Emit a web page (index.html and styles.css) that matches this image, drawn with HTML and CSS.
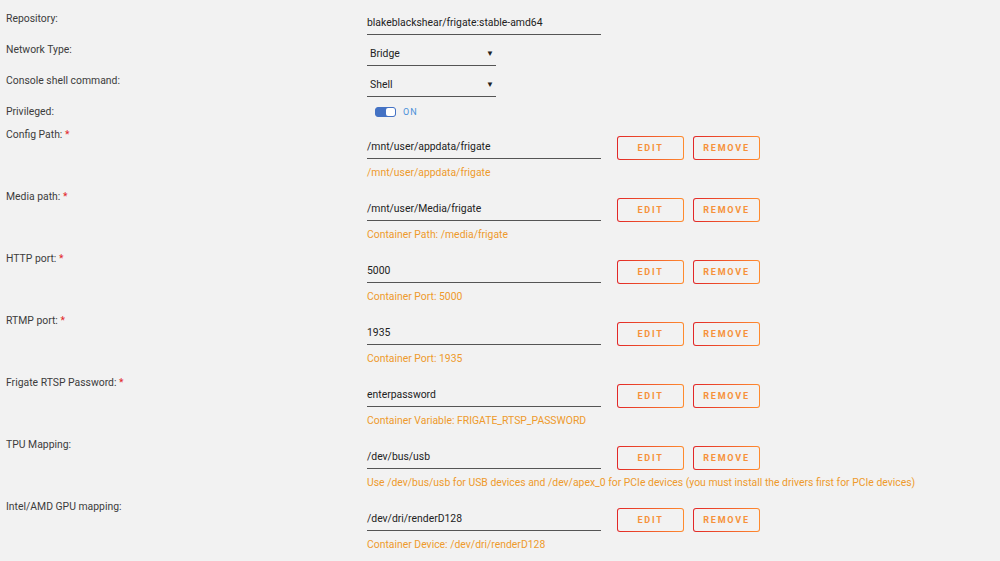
FILE: index.html
```html
<!DOCTYPE html>
<html lang="en">
<head>
    <meta charset="UTF-8">
    <meta name="viewport" content="width=device-width, initial-scale=1.0">
    <title>Update Container - frigate</title>
    <link rel="stylesheet" href="styles.css">
</head>
<body>
    <div class="form">
        <div class="row row-note">
            <div class="label"></div>
            <div class="value"><span class="note">Check the configuration guide: https://github.com/blakeblackshear/frigate/wiki/getting-started-quickly</span></div>
        </div>
        <div class="row row-basic">
            <div class="label">Repository:</div>
            <div class="value"><div class="field wide">blakeblackshear/frigate:stable-amd64</div></div>
        </div>
        <div class="row row-basic">
            <div class="label">Network Type:</div>
            <div class="value"><div class="field select">Bridge<span class="caret">&#9660;</span></div></div>
        </div>
        <div class="row row-basic">
            <div class="label">Console shell command:</div>
            <div class="value"><div class="field select">Shell<span class="caret">&#9660;</span></div></div>
        </div>
        <div class="row row-toggle">
            <div class="label">Privileged:</div>
            <div class="value">
                <span class="switch"><span class="knob"></span></span>
                <span class="switch-text">ON</span>
            </div>
        </div>

        <div class="row row-path">
            <div class="label">Config Path: <span class="req">*</span></div>
            <div class="value">
                <div class="input-line">
                    <div class="field wide">/mnt/user/appdata/frigate</div>
                    <button class="btn">EDIT</button>
                    <button class="btn">REMOVE</button>
                </div>
                <div class="hint">/mnt/user/appdata/frigate</div>
            </div>
        </div>
        <div class="row row-path">
            <div class="label">Media path: <span class="req">*</span></div>
            <div class="value">
                <div class="input-line">
                    <div class="field wide">/mnt/user/Media/frigate</div>
                    <button class="btn">EDIT</button>
                    <button class="btn">REMOVE</button>
                </div>
                <div class="hint">Container Path: /media/frigate</div>
            </div>
        </div>
        <div class="row row-path">
            <div class="label">HTTP port: <span class="req">*</span></div>
            <div class="value">
                <div class="input-line">
                    <div class="field wide">5000</div>
                    <button class="btn">EDIT</button>
                    <button class="btn">REMOVE</button>
                </div>
                <div class="hint">Container Port: 5000</div>
            </div>
        </div>
        <div class="row row-path">
            <div class="label">RTMP port: <span class="req">*</span></div>
            <div class="value">
                <div class="input-line">
                    <div class="field wide">1935</div>
                    <button class="btn">EDIT</button>
                    <button class="btn">REMOVE</button>
                </div>
                <div class="hint">Container Port: 1935</div>
            </div>
        </div>
        <div class="row row-path">
            <div class="label">Frigate RTSP Password: <span class="req">*</span></div>
            <div class="value">
                <div class="input-line">
                    <div class="field wide">enterpassword</div>
                    <button class="btn">EDIT</button>
                    <button class="btn">REMOVE</button>
                </div>
                <div class="hint">Container Variable: FRIGATE_RTSP_PASSWORD</div>
            </div>
        </div>
        <div class="row row-path">
            <div class="label">TPU Mapping:</div>
            <div class="value">
                <div class="input-line">
                    <div class="field wide">/dev/bus/usb</div>
                    <button class="btn">EDIT</button>
                    <button class="btn">REMOVE</button>
                </div>
                <div class="hint">Use /dev/bus/usb for USB devices and /dev/apex_0 for PCIe devices (you must install the drivers first for PCIe devices)</div>
            </div>
        </div>
        <div class="row row-path">
            <div class="label">Intel/AMD GPU mapping:</div>
            <div class="value">
                <div class="input-line">
                    <div class="field wide">/dev/dri/renderD128</div>
                    <button class="btn">EDIT</button>
                    <button class="btn">REMOVE</button>
                </div>
                <div class="hint">Container Device: /dev/dri/renderD128</div>
            </div>
        </div>
    </div>
</body>
</html>
```

FILE: styles.css
```css
body {
    margin: 0;
    background-color: #f2f2f2;
    font-family: Roboto, "Open Sans", sans-serif;
    font-size: 10.4px;
    color: #3c3c3c;
    overflow: hidden;
}
.form {
    padding-top: 1px;
    padding-left: 6px;
}
.row {
    display: grid;
    grid-template-columns: 361px 1fr;
}
.label {
    line-height: 14px;
}
.req {
    color: #e22828;
}
.row-note {
    height: 11px;
    overflow: visible;
}
.note {
    display: block;
    margin-top: -14px;
    line-height: 14px;
    color: #486dba;
    white-space: nowrap;
}
.row-basic {
    height: 31px;
}
.field {
    box-sizing: border-box;
    height: 23px;
    line-height: 22px;
    border-bottom: 1px solid #555;
    color: #222;
}
.field.wide {
    width: 234px;
}
.field.select {
    width: 129px;
    padding-left: 3px;
    display: flex;
    justify-content: space-between;
}
.caret {
    font-size: 8px;
    padding-right: 2px;
}
.row-toggle {
    height: 23px;
}
.row-toggle .value {
    display: flex;
    align-items: center;
    height: 14px;
    padding-left: 8px;
}
.switch {
    display: inline-block;
    box-sizing: border-box;
    width: 21px;
    height: 10px;
    border-radius: 3px;
    background: #4472c4;
    border: 1px solid #4472c4;
    position: relative;
}
.knob {
    position: absolute;
    right: 0;
    top: 0;
    width: 9px;
    height: 8px;
    border-radius: 2px;
    background: #fff;
}
.switch-text {
    margin-left: 7px;
    font-size: 9px;
    letter-spacing: 1px;
    color: #4a90d9;
}
.row-path {
    height: 62px;
}
.input-line {
    margin-top: 8px;
    display: flex;
    align-items: flex-end;
}
.btn {
    box-sizing: border-box;
    width: 67px;
    height: 24px;
    margin-left: 9px;
    margin-bottom: -1px;
    padding: 0;
    border: 1px solid transparent;
    border-radius: 3px;
    background: linear-gradient(#f2f2f2, #f2f2f2) padding-box,
                linear-gradient(90deg, #e22828, #ff8c2f) border-box;
    font-family: Roboto, "Open Sans", sans-serif;
    font-size: 9px;
    font-weight: bold;
    letter-spacing: 1.8px;
    color: #f6913a;
}
.field + .btn {
    margin-left: 16px;
}
.hint {
    margin-top: 7px;
    line-height: 14px;
    color: #ee9a2c;
}
```
